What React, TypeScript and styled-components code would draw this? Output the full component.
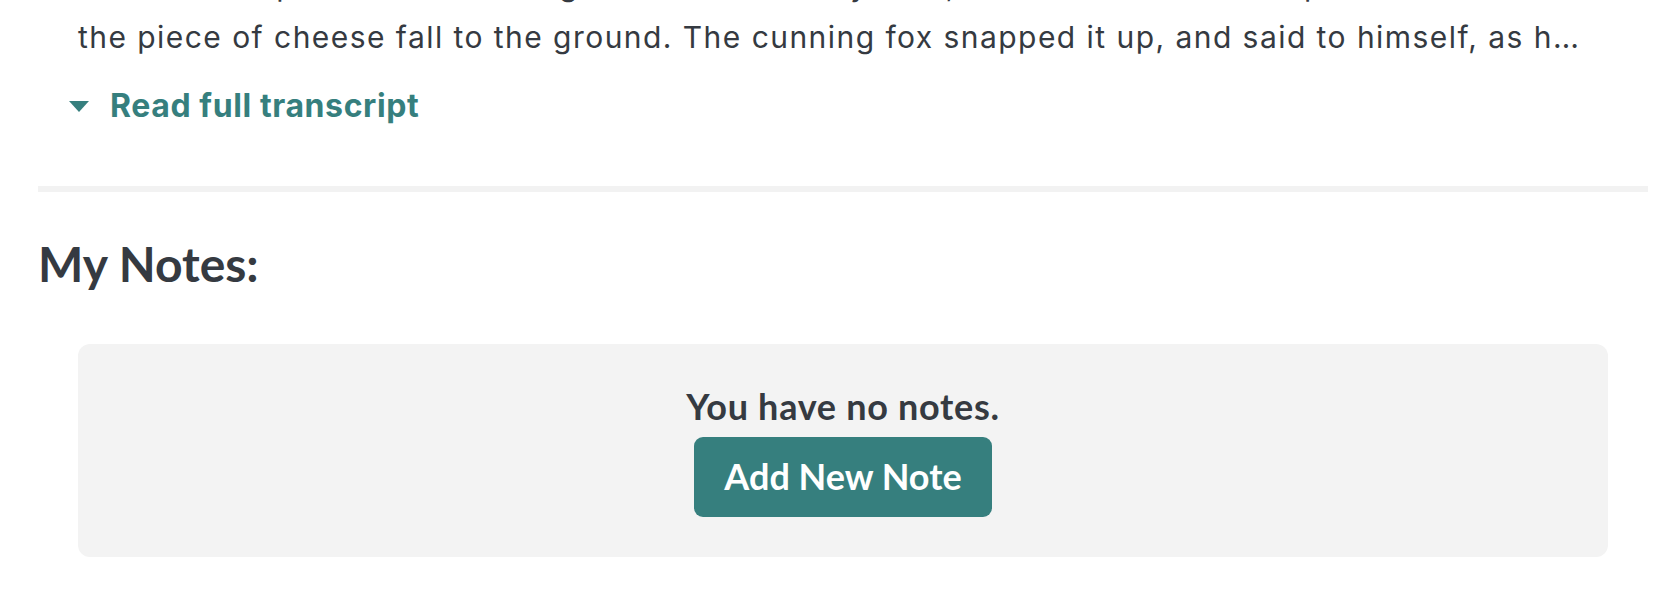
import React from 'react';
import styled, { createGlobalStyle } from 'styled-components';

const GlobalStyle = createGlobalStyle`
  * { box-sizing: border-box; }
  body {
    margin: 0;
    background: #ffffff;
    font-family: Lato, "Open Sans", Arial, sans-serif;
    color: #353a41;
  }
`;

const transcriptLines = [
  'Crow lifted up her head and began to caw her very best, but the moment she opened her mouth she let',
  'the piece of cheese fall to the ground. The cunning fox snapped it up, and said to himself, as h…',
];

export default function App() {
  return (
    <>
      <GlobalStyle />
      <Page>
        <Transcript>
          <Viewport>
            <TranscriptText>
              {transcriptLines.map((line, i) => (
                <Line key={i}>{line}</Line>
              ))}
            </TranscriptText>
          </Viewport>
          <ReadMore type="button">
            <Caret viewBox="0 0 20 11" aria-hidden="true">
              <path d="M0 0 H20 L10 11 Z" fill="currentColor" />
            </Caret>
            Read full transcript
          </ReadMore>
        </Transcript>
        <Divider />
        <Heading>My Notes:</Heading>
        <NotesBox>
          <EmptyText>You have no notes.</EmptyText>
          <AddButton type="button">Add New Note</AddButton>
        </NotesBox>
      </Page>
    </>
  );
}

const Page = styled.div`
  display: flex;
  flex-direction: column;
  padding: 0 24px 36px 38px;
`;

const Transcript = styled.section`
  display: flex;
  flex-direction: column;
`;

/* the transcript is scrolled: only the tail of the previous line peeks in */
const Viewport = styled.div`
  overflow: hidden;
  height: 63px;
  padding-left: 40px;
`;

const TranscriptText = styled.div`
  margin-top: -41px;
  font-family: Inter, "Open Sans", Arial, sans-serif;
  font-size: 30px;
  line-height: 52px;
  letter-spacing: 1.45px;
  color: #353a41;
`;

const Line = styled.div`
  white-space: nowrap;
`;

const ReadMore = styled.button`
  display: flex;
  align-items: center;
  gap: 21px;
  align-self: flex-start;
  margin: 24px 0 0 31px;
  padding: 0;
  border: 0;
  background: none;
  font-family: Inter, Lato, Arial, sans-serif;
  font-size: 32px;
  font-weight: 700;
  line-height: 38px;
  letter-spacing: 0.6px;
  color: #367f7e;
  cursor: pointer;
`;

const Caret = styled.svg`
  width: 20px;
  height: 11px;
`;

const Divider = styled.hr`
  margin: 61px 0 0;
  height: 6px;
  border: 0;
  background: #f2f2f2;
`;

const Heading = styled.h2`
  margin: 43px 0 0;
  font-size: 48px;
  font-weight: 700;
  line-height: 58px;
  color: #353a41;
`;

const NotesBox = styled.div`
  display: flex;
  flex-direction: column;
  align-items: center;
  gap: 9px;
  margin: 51px 40px 0 40px;
  padding: 41px 0 40px;
  background: #f3f3f3;
  border-radius: 12px;
`;

const EmptyText = styled.p`
  margin: 0;
  font-size: 36px;
  font-weight: 700;
  line-height: 43px;
  letter-spacing: 0.7px;
  color: #353a41;
`;

const AddButton = styled.button`
  height: 80px;
  padding: 0 30px 3px;
  border: 0;
  border-radius: 9px;
  background: #367f7e;
  color: #ffffff;
  font-family: inherit;
  font-size: 36px;
  font-weight: 700;
  cursor: pointer;
`;
